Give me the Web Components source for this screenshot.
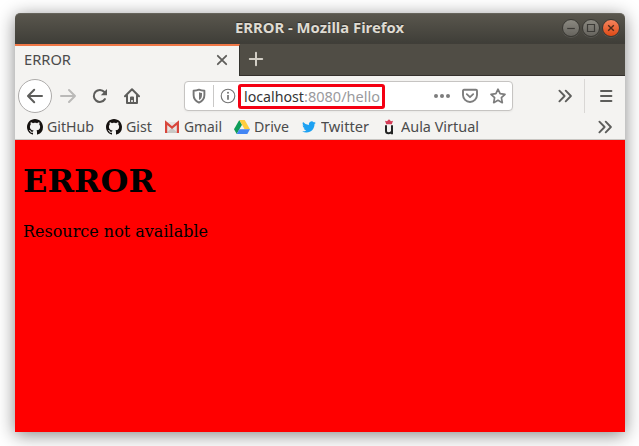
<!DOCTYPE html>
<html lang="en"><head><meta charset="utf-8"><title>ERROR - Mozilla Firefox</title>
<style>html,body{margin:0;height:100%;overflow:hidden;background:#fff}</style></head>
<body><browser-window></browser-window>
<script>
const define=(name,html,init)=>customElements.define(name,class extends HTMLElement{
  connectedCallback(){
    if(this.shadowRoot)return;
    const t=document.createElement('template');t.innerHTML=html;
    this.attachShadow({mode:'open'}).append(t.content.cloneNode(true));
    if(init)init.call(this,this.shadowRoot);
  }
});

/* A label whose glyphs are condensed or widened to span a fixed width. */
define('fit-label',`<style>:host{display:block;flex:none;white-space:nowrap;line-height:20px}span{display:inline-block;transform-origin:0 50%}</style><span><slot></slot></span>`,function(r){
  const s=r.querySelector('span'),w=+this.getAttribute('width');
  this.style.width=w+'px';
  s.style.transform='scaleX('+(w/s.getBoundingClientRect().width)+')';
});

const icons={
back:['20 20','<path d="M17 10H3.2M9.2 3.8 3 10l6.2 6.2" fill="none" stroke="#5d5d5b" stroke-width="2" stroke-linecap="round" stroke-linejoin="round"/>'],
forward:['20 20','<path d="M3 10h14M11 4l6 6-6 6" fill="none" stroke="#bab9b8" stroke-width="2" stroke-linecap="round" stroke-linejoin="round"/>'],
reload:['16 16','<path d="M12.9 11.1A6 6 0 1 1 12.4 4" fill="none" stroke="#5d5d5b" stroke-width="2" stroke-linecap="round"/><path d="M15 1v6.3H8.8z" fill="#5d5d5b"/>'],
home:['16 16','<path d="M1 8.2 8 1.3l7 6.9M3 7.5V15h10V7.5" fill="none" stroke="#5d5d5b" stroke-width="2" stroke-linecap="round" stroke-linejoin="round"/><path d="M6 14V9.4Q6 8.5 7 8.5h2q1 0 1 .9V14H8.8v-2H7.2v2z" fill="#5d5d5b"/>'],
shield:['16 16','<path d="M8 1.6c1.8.7 3.6 1 5.4 1.1V7c0 4.3-2.4 6.3-5.4 7.6C5 13.3 2.6 11.3 2.6 7V2.7C4.4 2.6 6.2 2.3 8 1.6z" fill="none" stroke="#767676" stroke-width="1.9" stroke-linejoin="round"/><path d="M8 4.2c1 .4 2 .6 3 .7V7c0 2.6-1.1 4.1-3 5.1z" fill="#767676"/>'],
info:['16 16','<circle cx="8" cy="8" r="6.8" fill="none" stroke="#737373" stroke-width="1.1"/><circle cx="8" cy="4.7" r="1" fill="#737373"/><path d="M8 7v4.8" stroke="#737373" stroke-width="1.7"/>'],
dots:['16 16','<g fill="#7d7d7d"><circle cx="2" cy="8" r="2"/><circle cx="8" cy="8" r="2"/><circle cx="14" cy="8" r="2"/></g>'],
pocket:['16 16','<path d="M2 1.8h12q1 0 1 1V7a7 7 0 0 1-14 0V2.8q0-1 1-1z" fill="none" stroke="#7d7d7d" stroke-width="1.9"/><path d="m4.8 6.2 3.2 3 3.2-3" fill="none" stroke="#7d7d7d" stroke-width="1.8" stroke-linecap="round" stroke-linejoin="round"/>'],
star:['16 16','<path d="m8 1.2 2.1 4.5 4.9.6-3.6 3.4.9 5L8 12.3l-4.3 2.4.9-5L1 6.3l4.9-.6z" fill="none" stroke="#7d7d7d" stroke-width="1.7" stroke-linejoin="round"/>'],
more:['16 16','<path d="m2.4 2.7 5.2 5.3-5.2 5.3M8.7 2.7 13.9 8l-5.2 5.3" fill="none" stroke="#5d5d5b" stroke-width="1.9" stroke-linecap="round" stroke-linejoin="round"/>'],
menu:['16 16','<path d="M3 3h10.4M3 8h10.4M3 13h10.4" stroke="#5d5d5b" stroke-width="2" stroke-linecap="round"/>'],
close:['12 12','<path d="m1.8 1.8 8.4 8.4m0-8.4-8.4 8.4" stroke="#5f5e5b" stroke-width="1.8" stroke-linecap="round"/>'],
plus:['16 16','<path d="M8 1.8v12.4M1.8 8h12.4" stroke="#d2cec5" stroke-width="2" stroke-linecap="round"/>'],
github:['16 16','<path fill="#15110f" d="M8 0C3.58 0 0 3.58 0 8c0 3.54 2.29 6.53 5.47 7.59.4.07.55-.17.55-.38 0-.19-.01-.82-.01-1.49-2.01.37-2.53-.49-2.69-.94-.09-.23-.48-.94-.82-1.13-.28-.15-.68-.52-.01-.53.63-.01 1.08.58 1.23.82.72 1.21 1.87.87 2.33.66.07-.52.28-.87.51-1.07-1.78-.2-3.64-.89-3.64-3.95 0-.87.31-1.59.82-2.15-.08-.2-.36-1.02.08-2.12 0 0 .67-.21 2.2.82.64-.18 1.32-.27 2-.27s1.36.09 2 .27c1.53-1.04 2.2-.82 2.2-.82.44 1.1.16 1.92.08 2.12.51.56.82 1.27.82 2.15 0 3.07-1.87 3.75-3.65 3.95.29.25.54.73.54 1.48 0 1.07-.01 1.93-.01 2.2 0 .21.15.46.55.38A8.01 8.01 0 0 0 16 8c0-4.42-3.58-8-8-8z"/>'],
gmail:['16 16','<path fill="#e6e4e2" d="M2 3h12v11H2z"/><path fill="#c9c7c4" d="m2 14 6-5 6 5z"/><path d="M2.1 14V3.6L8 8.6l5.9-5V14" fill="none" stroke="#d8463b" stroke-width="2.2"/>'],
drive:['16 16','<path fill="#0f9d58" d="M5.3 1 0 10.2 2.7 15 8 5.7z"/><path fill="#ffcd40" d="M5.3 1h5.4l5.3 9.2h-5.4z"/><path fill="#4285f4" d="M5.4 10.2H16L13.3 15H2.7z"/>'],
twitter:['28 28','<path transform="translate(2 2)" fill="#1da1f2" d="M23.95 4.57a10 10 0 0 1-2.82.77 4.96 4.96 0 0 0 2.16-2.72c-.95.55-2 .95-3.13 1.19a4.92 4.92 0 0 0-8.38 4.48A13.9 13.9 0 0 1 1.64 3.16a4.92 4.92 0 0 0 1.52 6.57 4.9 4.9 0 0 1-2.23-.61v.06a4.92 4.92 0 0 0 3.95 4.83 5 5 0 0 1-2.21.08 4.94 4.94 0 0 0 4.6 3.42A9.87 9.87 0 0 1 0 19.54a13.94 13.94 0 0 0 7.55 2.21c9.05 0 14-7.5 14-13.99 0-.21 0-.42-.02-.63a9.94 9.94 0 0 0 2.42-2.56z"/>'],
crest:['16 16','<path d="M4 1.8 6 2.3 8 .2l2 2.1 2-.5-1.200 3.400H5.200z" fill="#d43c57"/><path d="M5 6.200v5.700q0 2.300 2.600 2.300 2 0 3.200-1.600M11 6.200V15.300" fill="none" stroke="#242424" stroke-width="2"/>'],
min:['18 18','<path d="M5.2 9.5h7.6" stroke="#3c3b37" stroke-width="1.2"/>'],
max:['18 18','<path d="M5.5 5.5h7v7h-7z" fill="none" stroke="#3c3b37" stroke-width="1.2"/>'],
shut:['18 18','<path d="m6.2 6.2 5.6 5.6m0-5.6-5.6 5.6" stroke="#4c2a1a" stroke-width="1.4"/>']
};
define('ui-icon',`<style>:host{display:block;flex:none;line-height:0}svg{display:block;width:100%;height:100%}</style><div></div>`,function(r){
  const [v,p]=icons[this.getAttribute('name')],s=(this.getAttribute('size')||16)+'px';
  this.style.width=this.style.height=s;
  const d=r.querySelector('div');d.style.height=s;
  d.innerHTML=`<svg viewBox="0 0 ${v}">${p}</svg>`;
});

define('window-button',`<style>:host{display:block;box-sizing:border-box;width:18px;height:18px;border-radius:50%;border:1px solid #393833;background:linear-gradient(#8b8981,#66645e);box-shadow:0 1px 0 #ffffff18}:host([kind=shut]){background:linear-gradient(#f5845d,#df4a16)}ui-icon{margin:-1px}</style><div></div>`,function(r){
  r.querySelector('div').innerHTML=`<ui-icon size="18" name="${this.getAttribute('kind')}"></ui-icon>`;
});

define('title-bar',`<style>:host{display:grid;grid-template-columns:61px 1fr 63px;align-items:center;height:30px;box-sizing:border-box;border-top:1px solid #66645b;border-radius:5px 5px 0 0;background:linear-gradient(#59564d,#3f3e38);color:#dfdbd2;font:bold 14.5px "Noto Sans",sans-serif;text-shadow:0 -1px 1px #302f2b}
fit-label{grid-column:2;justify-self:center;padding-bottom:3px}div{display:flex;gap:2px;padding-bottom:1px}</style>
<fit-label width="169"><slot></slot></fit-label><div><window-button kind="min"></window-button><window-button kind="max"></window-button><window-button kind="shut"></window-button></div>`);

define('tab-strip',`<style>:host{display:flex;height:33px;box-sizing:border-box;background:#504d45;border-top:1px solid #403e38;color:#4b4b4c;font:14.5px "Noto Sans",sans-serif}
.tab{box-sizing:border-box;width:225px;border-top:2px solid #f07746;background:#f4f3f1;border-right:1px solid #34332f;display:flex;justify-content:space-between;align-items:center;padding:0 11px 2px 9px}
fit-label{padding-bottom:2px}
.rest{flex:1;display:flex;align-items:center;padding-left:8px;padding-bottom:1px;border-bottom:1px solid #34302c}</style>
<div class="tab"><fit-label width="47"><slot></slot></fit-label><ui-icon name="close" size="12"></ui-icon></div><div class="rest"><ui-icon name="plus"></ui-icon></div>`);

define('address-bar',`<style>:host{display:flex;align-items:center;box-sizing:border-box;width:329px;height:30px;border:1px solid #c6c4c2;border-radius:4px;background:#fff;padding:0 6px;box-shadow:0 1px 2px #0000000c;color:#9a9a9d;font:14.5px "Noto Sans",sans-serif}
.sep{width:1px;height:22px;background:#c9c8c7;margin:0 6px}
.mark{box-sizing:border-box;display:flex;align-items:center;width:147px;height:25px;border:3px solid #f40012;border-radius:3px;margin-left:2px;padding-left:3px}
b{font-weight:400;color:#343434}.actions{display:flex;gap:12px;margin-left:auto}</style>
<ui-icon name="shield"></ui-icon><i class="sep"></i><ui-icon name="info"></ui-icon><div class="mark"><fit-label width="60"><b>localhost</b></fit-label><fit-label width="76">:8080/hello</fit-label></div>
<div class="actions"><ui-icon name="dots"></ui-icon><ui-icon name="pocket"></ui-icon><ui-icon name="star"></ui-icon></div>`);

define('nav-bar',`<style>:host{display:flex;align-items:center;height:40px;padding:0 11px 0 3px}
.back{box-sizing:border-box;width:34px;height:34px;border:1px solid #adabaa;border-radius:50%;background:#fff;display:grid;place-items:center}
.nav{display:flex;align-items:center;gap:16px;margin-left:6px}.forward{margin-right:-2px}address-bar{margin-left:44px}.more{margin-left:44px}.sep{width:1px;height:34px;background:#d9d7d5;margin-left:11px}.menu{margin-left:auto}
</style><div class="back"><ui-icon name="back" size="20"></ui-icon></div><div class="nav"><ui-icon class="forward" name="forward" size="20"></ui-icon><ui-icon name="reload"></ui-icon><ui-icon name="home"></ui-icon></div><address-bar></address-bar><ui-icon class="more" name="more"></ui-icon><i class="sep"></i><ui-icon class="menu" name="menu"></ui-icon>`);

define('book-mark',`<style>:host,div{display:flex;align-items:center;gap:4px}fit-label{padding-bottom:2px}</style><div></div>`,function(r){
  r.querySelector('div').innerHTML=`<ui-icon name="${this.getAttribute('icon')}"></ui-icon><fit-label width="${this.getAttribute('width')}">${this.getAttribute('label')}</fit-label>`;
});

define('bookmarks-bar',`<style>:host{display:flex;align-items:center;gap:12px;height:22px;padding:0 12px;color:#4b4b4c;font:14.5px "Noto Sans",sans-serif}.more{margin-left:auto}</style>
<book-mark icon="github" width="47" label="GitHub"></book-mark><book-mark icon="github" width="26" label="Gist"></book-mark><book-mark icon="gmail" width="38" label="Gmail"></book-mark><book-mark icon="drive" width="35" label="Drive"></book-mark><book-mark icon="twitter" width="48" label="Twitter"></book-mark><book-mark icon="crest" width="78" label="Aula Virtual"></book-mark><ui-icon class="more" name="more"></ui-icon>`);

define('error-page',`<style>:host{display:block;flex:1;background:#f00;color:#000;font:16px "DejaVu Serif",serif;padding:0 8px}h1{font-size:32px;line-height:38px;margin:22px 0 22px}p{margin:0;line-height:20px}</style><h1><slot name="title"></slot></h1><p><slot></slot></p>`);

define('browser-window',`<style>:host{display:flex;height:446px;box-sizing:border-box;padding:13px 14px 14px 15px}
.win{flex:1;display:flex;flex-direction:column;border-radius:5px 5px 0 0;box-shadow:0 3px 18px #0000007a}
.tools{background:#f4f3f1;height:64px;box-sizing:border-box;border-bottom:1px solid #c8c5c2}</style>
<div class="win"><title-bar>ERROR - Mozilla Firefox</title-bar><tab-strip>ERROR</tab-strip><div class="tools"><nav-bar></nav-bar><bookmarks-bar></bookmarks-bar></div><error-page><span slot="title">ERROR</span>Resource not available</error-page></div>`);
</script></body></html>
